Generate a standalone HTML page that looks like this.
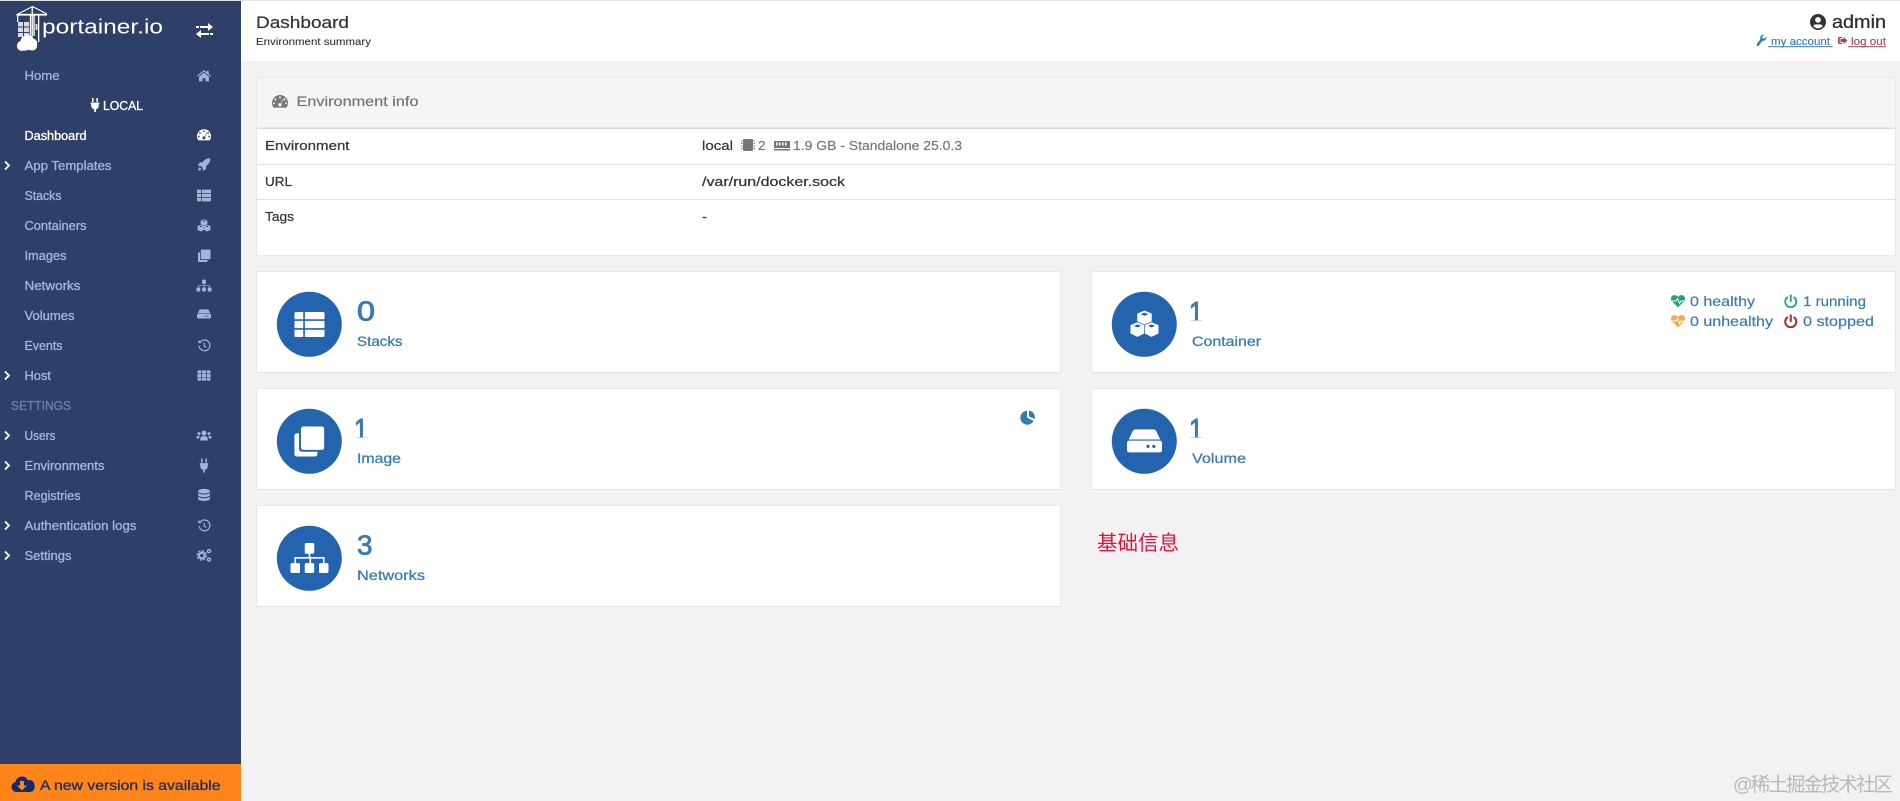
<!DOCTYPE html>
<html lang="en"><head><meta charset="utf-8"><title>Dashboard</title>
<style>
html,body{margin:0;padding:0;width:1900px;height:801px;overflow:hidden;background:#f2f2f2}
svg{display:block;filter:blur(.35px)}
text{font-family:"Liberation Sans","Noto Sans CJK SC",sans-serif}
.n{font-size:12.8px;fill:#a5b5da;stroke:#a5b5da;stroke-width:.32}
.w{fill:#fff;stroke:#fff}
.k{font-size:13px;fill:#333;stroke:#333;stroke-width:.22}
.g{font-size:13px;fill:#777;stroke:#777;stroke-width:.2}
.num{font-size:28px;fill:#3a7bb5;stroke:#3a7bb5;stroke-width:.8}
.one{font-size:31px;fill:#3a7bb5;stroke:#3a7bb5;stroke-width:1}
.lab{font-size:14px;fill:#3a7bb5;stroke:#3a7bb5;stroke-width:.28}
.st{font-size:14px;fill:#3a7bb5;stroke:#3a7bb5;stroke-width:.2}
</style></head><body>
<svg width="1900" height="801" viewBox="0 0 1900 801" xmlns="http://www.w3.org/2000/svg">
<defs>
<clipPath id="c1"><rect x="340" y="290" width="1000" height="30.500"/></clipPath>
<clipPath id="c2"><rect x="340" y="407" width="1000" height="30.500"/></clipPath>
<symbol id="list" viewBox="0 0 24 24"><path d="M1 2h6v5.800H0V3a1 1 0 0 1 1-1zM8.300 2H23a1 1 0 0 1 1 1v4.800H8.300zM0 9.100h7v5.800H0zM8.300 9.100H24v5.800H8.300zM0 16.200h7V22H1a1 1 0 0 1-1-1zM8.300 16.200H24V21a1 1 0 0 1-1 1H8.300z"/></symbol>
<symbol id="clone" viewBox="0 0 24 24"><path d="M7.300 0H22a2 2 0 0 1 2 2v14.700a2 2 0 0 1-2 2H7.300a2 2 0 0 1-2-2V2a2 2 0 0 1 2-2z"/><path d="M3.800 5.500H2a2 2 0 0 0-2 2V22a2 2 0 0 0 2 2h14.500a2 2 0 0 0 2-2v-1.800H6a2.200 2.200 0 0 1-2.200-2.200z"/></symbol>
<symbol id="map" viewBox="0 0 24 24"><path d="M10 2.500h4a1 1 0 0 1 1 1V8.300a1 1 0 0 1-1 1h-1.500v2.100h9v3.800h-1v-2.800h-7.500v2.800h-1v-2.800H3.500v2.800h-1v-3.800h9V9.300H10a1 1 0 0 1-1-1V3.500a1 1 0 0 1 1-1z"/><path d="M1 15.200h4a1 1 0 0 1 1 1v4.300a1 1 0 0 1-1 1H1a1 1 0 0 1-1-1v-4.300a1 1 0 0 1 1-1zM10 15.200h4a1 1 0 0 1 1 1v4.300a1 1 0 0 1-1 1h-4a1 1 0 0 1-1-1v-4.300a1 1 0 0 1 1-1zM19 15.200h4a1 1 0 0 1 1 1v4.300a1 1 0 0 1-1 1h-4a1 1 0 0 1-1-1v-4.300a1 1 0 0 1 1-1z"/></symbol>
<symbol id="hdd" viewBox="0 0 24 24"><path d="M6 4h12c1 0 1.700.5 2.100 1.300L22.800 11H1.200l2.700-5.700C4.300 4.500 5 4 6 4z"/><path fill-rule="evenodd" d="M1.500 11.700h21a1.500 1.500 0 0 1 1.500 1.500v5.100a1.500 1.500 0 0 1-1.500 1.500h-21A1.500 1.500 0 0 1 0 18.300v-5.100a1.500 1.500 0 0 1 1.500-1.500zM13.300 15.700a1.100 1.100 0 1 0 2.200 0 1.100 1.100 0 1 0-2.200 0zM17.300 15.700a1.100 1.100 0 1 0 2.200 0 1.100 1.100 0 1 0-2.200 0z"/></symbol>
<symbol id="cubes" viewBox="0 0 24 24"><path fill-rule="evenodd" d="M12 .5l6.200 2.500v6.700L12 12.400 5.800 9.700V3zM12 2.300L8.700 3.600 12 5 15.300 3.600z"/><path fill-rule="evenodd" d="M6 10.500l5.700 2.500v7.100L6 23 0 20.100V13zM6 12.300L2.900 13.600 6 15l3.100-1.400z"/><path fill-rule="evenodd" d="M18 10.500l6 2.500v7.100L18 23l-5.700-2.900V13zM18 12.300l-3.100 1.300L18 15l3.100-1.400z"/></symbol>
<symbol id="home" viewBox="0 0 24 24"><path d="M12 2.500l5 4.200V4h3v5.200l4 3.400-1.300 1.500L12 5.100 1.300 14.100 0 12.600z"/><path d="M12 7l8.500 7.200V22h-6v-5.500h-5V22h-6v-7.800z"/></symbol>
<symbol id="gauge" viewBox="0 0 24 24"><path fill-rule="evenodd" d="M12 3A12 12 0 0 0 0 15c0 2.400.7 4.600 2 6.500.3.400.8.500 1.200.500h17.600c.4 0 .9-.1 1.200-.5 1.300-1.900 2-4.100 2-6.500A12 12 0 0 0 12 3zM12 5a1.500 1.500 0 1 0 0 3 1.500 1.500 0 1 0 0-3zM5 8a1.500 1.500 0 1 0 0 3 1.500 1.500 0 1 0 0-3zM19 8a1.500 1.500 0 1 0 0 3 1.500 1.500 0 1 0 0-3zM3 14a1.500 1.500 0 1 0 0 3 1.500 1.500 0 1 0 0-3zM21 14a1.500 1.500 0 1 0 0 3 1.500 1.500 0 1 0 0-3zM16.500 8.500l-3.200 7.200a2.500 2.500 0 1 0-2.500 4.300 2.500 2.500 0 0 0 3.700-2.200c0-.6-.2-1-.5-1.400l3.300-7.400z"/></symbol>
<symbol id="rocket" viewBox="0 0 24 24"><path d="M23.500.5C17 .5 12.500 3 9.500 8H4L.5 14.500H6L9.500 18v5.500L16 20v-5.500C21 11.500 23.500 7 23.500.5z"/><path d="M4 17c-2 1-3 3.500-3 6 2.500 0 5-1 6-3z"/></symbol>
<symbol id="hist" viewBox="0 0 24 24"><g fill="none" stroke="currentColor" stroke-width="2.200"><path d="M5.500 6A10 10 0 1 1 3 14"/><path d="M12.500 8v6l3.500 2.500"/></g><path d="M1.500 2.500L8 8.500H1.500z"/></symbol>
<symbol id="th" viewBox="0 0 24 24"><path d="M1 2.500h6v5.700H0V3.500a1 1 0 0 1 1-1zM8.300 2.500h7.400v5.700H8.300zM17 2.500h6a1 1 0 0 1 1 1v4.700h-7zM0 9.300h7v5.400H0zM8.300 9.300h7.400v5.400H8.300zM17 9.300h7v5.400h-7zM0 15.800h7v5.700H1a1 1 0 0 1-1-1zM8.300 15.800h7.400v5.700H8.300zM17 15.800h7v4.700a1 1 0 0 1-1 1h-6z"/></symbol>
<symbol id="users" viewBox="0 0 24 24"><circle cx="12" cy="8" r="4"/><path d="M6 20v-2.500c0-2.500 2-4.500 4-4.500h4c2 0 4 2 4 4.500V20z"/><circle cx="4" cy="9" r="2.400"/><circle cx="20" cy="9" r="2.400"/><path d="M0 16v-1.500C0 13 1.300 12.500 2.500 12.500h3C4.500 13.800 4 15 4 17H1a1 1 0 0 1-1-1zM24 16v-1.500c0-1.500-1.300-2-2.500-2h-3c1 1.300 1.500 2.500 1.500 4.500h3a1 1 0 0 0 1-1z"/></symbol>
<symbol id="plug" viewBox="0 0 24 24"><path d="M7 0h2.600v7H7zM14.400 0H17v7h-2.600zM4.500 8h15v2.500h-1V13a6.500 6.500 0 0 1-5 6.300V24h-3v-4.700a6.500 6.500 0 0 1-5-6.300v-2.500h-1z"/></symbol>
<symbol id="db" viewBox="0 0 24 24"><ellipse cx="12" cy="5" rx="11" ry="4.300"/><path d="M1 8c2 2 6 3 11 3s9-1 11-3v4c0 2.200-5 4-11 4S1 14.200 1 12z"/><path d="M1 15c2 2 6 3 11 3s9-1 11-3v4c0 2.200-5 4-11 4S1 21.200 1 19z"/></symbol>
<symbol id="cogs" viewBox="0 0 24 24"><g fill="none" stroke="currentColor"><circle cx="8.500" cy="12" r="4.500" stroke-width="3.400"/><circle cx="8.500" cy="12" r="7.400" stroke-width="2.200" stroke-dasharray="3.400 2.400"/><circle cx="20" cy="5" r="2.500" stroke-width="2.200"/><circle cx="20" cy="18.500" r="2.500" stroke-width="2.200"/></g></symbol>
<symbol id="heart" viewBox="0 0 24 24"><path d="M12 23L2 12.800C-.8 10-.6 5.800 1.800 3.500 4.300 1 8.800 1.300 12 4.800c3.200-3.500 7.700-3.800 10.200-1.300 2.400 2.300 2.600 6.500-.2 9.300z"/></symbol>
<symbol id="pow" viewBox="0 0 24 24"><g fill="none" stroke="currentColor" stroke-width="3.600"><path d="M7 4.500a9.800 9.800 0 1 0 10 0"/><path d="M12 1v11" stroke-linecap="round"/></g></symbol>
<symbol id="ucirc" viewBox="0 0 24 24"><path fill-rule="evenodd" d="M12 0a12 12 0 1 0 0 24 12 12 0 1 0 0-24zM12 4.500a4.300 4.300 0 1 1 0 8.600 4.300 4.300 0 1 1 0-8.600zM12 21.500a9.300 9.300 0 0 1-7.100-3.300c.9-1.700 2.700-2.900 4.700-2.900.8.300 1.500.4 2.400.4s1.600-.1 2.400-.4c2 0 3.800 1.200 4.700 2.900A9.300 9.300 0 0 1 12 21.500z"/></symbol>
</defs>

<!-- base -->
<rect width="1900" height="801" fill="#f2f2f2"/>
<rect x="241" y="0" width="1659" height="61" fill="#fff"/>
<rect x="241" y="0" width="1659" height="1" fill="#e2e2e2"/>
<rect x="0" y="0" width="241" height="801" fill="#2f4068"/>
<rect x="0" y="0" width="241" height="1" fill="#e2e2e2"/>
<rect x="0" y="764" width="241" height="37" fill="#ff851b"/>

<!-- logo -->
<g fill="#fff">
<rect x="16.500" y="13.800" width="30.500" height="1.800"/>
<path d="M18 14L32.500 6.500 47 14" fill="none" stroke="#fff" stroke-width="1"/>
<rect x="31.600" y="6.500" width="1.300" height="30"/>
<rect x="29.800" y="15" width="1.300" height="21"/>
<rect x="33.400" y="15" width="1.300" height="21"/>
<rect x="38" y="15" width="1.300" height="27"/>
<rect x="17" y="15" width="1.300" height="7"/>
<g opacity=".82">
<rect x="18" y="22" width="5" height="4.500"/><rect x="24" y="22" width="5" height="4.500"/>
<rect x="18" y="27.500" width="5" height="4.500"/><rect x="24" y="27.500" width="5" height="4.500"/>
<rect x="18" y="33" width="5" height="4"/><rect x="24" y="33" width="5" height="4"/>
</g>
<rect x="35.500" y="24" width="2" height="6" opacity=".8"/>
<path d="M21.500 51a5 5 0 0 1-4.500-5 5 5 0 0 1 3.500-5 7 7 0 0 1 13-2.500 5 5 0 0 1 3.500 6 5 5 0 0 1-2.500 5.500c-2 .8-4 .5-6-.2-2 .9-4.500 1.200-7 .7z"/>
</g>
<text x="42" y="33.500" font-size="20.500" fill="#fff" textLength="121" lengthAdjust="spacingAndGlyphs">portainer.io</text>
<!-- toggle -->
<g fill="#fff">
<path d="M196 26h3v2h-3zM200 26h8v-3l5 4-5 4v-3h-8z"/>
<path d="M210 34h3v2h-3zM201 34h8v2h-8v3l-5-4 5-4z" transform="translate(0,-1)"/>
</g>

<!-- nav -->
<text class="n" x="24.500" y="80" textLength="35" lengthAdjust="spacingAndGlyphs">Home</text>
<g fill="#a5b5da"><use href="#home" x="197" y="68.500" width="14" height="14"/></g>
<g fill="#fff"><use href="#plug" x="88" y="98" width="14" height="14"/></g>
<text class="n w" x="103" y="110" textLength="40" lengthAdjust="spacingAndGlyphs">LOCAL</text>
<text class="n w" x="24.500" y="140" textLength="62" lengthAdjust="spacingAndGlyphs">Dashboard</text>
<g fill="#fff"><use href="#gauge" x="197" y="127.500" width="14" height="14"/></g>
<text class="n" x="24.500" y="170" textLength="87" lengthAdjust="spacingAndGlyphs">App Templates</text>
<g fill="#a5b5da"><use href="#rocket" x="197.500" y="158" width="13" height="13"/></g>
<text class="n" x="24.500" y="200" textLength="37" lengthAdjust="spacingAndGlyphs">Stacks</text>
<g fill="#a5b5da"><use href="#list" x="197" y="188.500" width="14" height="14"/></g>
<text class="n" x="24.500" y="230" textLength="62" lengthAdjust="spacingAndGlyphs">Containers</text>
<g fill="#a5b5da"><use href="#cubes" x="197.500" y="219" width="13" height="13"/></g>
<text class="n" x="24.500" y="260" textLength="42" lengthAdjust="spacingAndGlyphs">Images</text>
<g fill="#a5b5da"><use href="#clone" x="198" y="249.500" width="12.500" height="12.500"/></g>
<text class="n" x="24.500" y="290" textLength="56" lengthAdjust="spacingAndGlyphs">Networks</text>
<g fill="#a5b5da"><use href="#map" x="196.500" y="278" width="15" height="15"/></g>
<text class="n" x="24.500" y="320" textLength="50" lengthAdjust="spacingAndGlyphs">Volumes</text>
<g fill="#a5b5da"><use href="#hdd" x="197" y="307" width="14" height="14"/></g>
<text class="n" x="24.500" y="350" textLength="38" lengthAdjust="spacingAndGlyphs">Events</text>
<g fill="#a5b5da" color="#a5b5da"><use href="#hist" x="197.500" y="338.500" width="13" height="13"/></g>
<text class="n" x="24.500" y="380" textLength="26.500" lengthAdjust="spacingAndGlyphs">Host</text>
<g fill="#a5b5da"><use href="#th" x="197.500" y="369" width="13" height="13"/></g>
<text x="11" y="410" font-size="12.800" fill="#6c80ae" stroke="#6c80ae" stroke-width=".3" textLength="60" lengthAdjust="spacingAndGlyphs">SETTINGS</text>
<text class="n" x="24.500" y="440" textLength="31" lengthAdjust="spacingAndGlyphs">Users</text>
<g fill="#a5b5da"><use href="#users" x="196.500" y="428" width="15" height="15"/></g>
<text class="n" x="24.500" y="470" textLength="80" lengthAdjust="spacingAndGlyphs">Environments</text>
<g fill="#a5b5da"><use href="#plug" x="197" y="458.500" width="14" height="14"/></g>
<text class="n" x="24.500" y="500" textLength="56" lengthAdjust="spacingAndGlyphs">Registries</text>
<g fill="#a5b5da"><use href="#db" x="197.500" y="488.500" width="13" height="13"/></g>
<text class="n" x="24.500" y="530" textLength="112" lengthAdjust="spacingAndGlyphs">Authentication logs</text>
<g fill="#a5b5da" color="#a5b5da"><use href="#hist" x="197.500" y="518.500" width="13" height="13"/></g>
<text class="n" x="24.500" y="560" textLength="47" lengthAdjust="spacingAndGlyphs">Settings</text>
<g fill="#a5b5da" color="#a5b5da"><use href="#cogs" x="196.500" y="548" width="15" height="15"/></g>
<!-- chevrons -->
<g fill="none" stroke="#fff" stroke-width="1.800">
<path d="M5 161.500l4 4-4 4M5 371.500l4 4-4 4M5 431.500l4 4-4 4M5 461.500l4 4-4 4M5 521.500l4 4-4 4M5 551.500l4 4-4 4"/>
</g>

<!-- footer -->
<path fill="#14296a" fill-rule="evenodd" d="M22 776.500a6.500 6.500 0 0 1 6 4 4.500 4.500 0 0 1 2.500-.5 5.500 5.500 0 0 1 4 5.500 5 5 0 0 1-4 6.500H16a5 5 0 0 1-4.500-5.500 5 5 0 0 1 4-4.500 6.500 6.500 0 0 1 6.500-5.500z"/>
<path fill="#ff851b" d="M20 781h4v4.500h3l-5 5-5-5h3z"/>
<text x="40" y="790" font-size="14" fill="#25305f" stroke="#25305f" stroke-width=".35" textLength="180.500" lengthAdjust="spacingAndGlyphs">A new version is available</text>

<!-- header -->
<text x="256" y="28" font-size="17" fill="#333" stroke="#333" stroke-width=".2" textLength="93" lengthAdjust="spacingAndGlyphs">Dashboard</text>
<text x="256" y="45" font-size="10.500" fill="#333" stroke="#333" stroke-width=".1" textLength="115" lengthAdjust="spacingAndGlyphs">Environment summary</text>
<g fill="#333"><use href="#ucirc" x="1810" y="14" width="16" height="16"/></g>
<text x="1832" y="28" font-size="18" fill="#333" stroke="#333" stroke-width=".3" textLength="54" lengthAdjust="spacingAndGlyphs">admin</text>
<path fill="#337ab7" d="M1766.500 36.500a3.500 3.500 0 0 1-4 4.200l-3.800 5a1.300 1.300 0 0 1-2-1.600l3.700-5a3.500 3.500 0 0 1 3.600-4.600l-2 2.500 1 1.500 2.200-.2z"/>
<text x="1771" y="45" font-size="11" fill="#337ab7" stroke="#337ab7" stroke-width=".12" textLength="59" lengthAdjust="spacingAndGlyphs">my account</text>
<rect x="1768" y="46.200" width="64.500" height="1" fill="#337ab7"/>
<path fill="#a94452" d="M1842 37h-2.500a1.500 1.500 0 0 0-1.500 1.500v4a1.500 1.500 0 0 0 1.500 1.500h2.500v-1.200h-2.300v-4.600h2.300zM1843.500 37l4 3.500-4 3.500v-2h-3v-3h3z"/>
<text x="1851" y="45" font-size="11" fill="#a94452" stroke="#a94452" stroke-width=".12" textLength="35" lengthAdjust="spacingAndGlyphs">log out</text>
<rect x="1848" y="46.200" width="38" height="1" fill="#a94452"/>

<!-- env panel -->
<rect x="256.500" y="77.500" width="1639" height="178" fill="#fff" stroke="#e9e9e9"/>
<rect x="257" y="78" width="1638" height="50" fill="#f5f5f5"/>
<rect x="257" y="127.500" width="1638" height="1.500" fill="#dcdcdc"/>
<rect x="257" y="164" width="1638" height="1" fill="#e2e2e2"/>
<rect x="257" y="199" width="1638" height="1" fill="#e2e2e2"/>
<g fill="#767676"><use href="#gauge" x="272" y="93" width="16" height="16"/></g>
<text x="296.500" y="106" font-size="14" fill="#767676" stroke="#767676" stroke-width=".22" textLength="122" lengthAdjust="spacingAndGlyphs">Environment info</text>
<text class="k" x="265" y="150" textLength="84.500" lengthAdjust="spacingAndGlyphs">Environment</text>
<text class="k" x="265" y="186" textLength="27" lengthAdjust="spacingAndGlyphs">URL</text>
<text class="k" x="265" y="221" textLength="29" lengthAdjust="spacingAndGlyphs">Tags</text>
<text class="k" x="702" y="150" textLength="31" lengthAdjust="spacingAndGlyphs">local</text>
<path fill="#777" d="M744 139h8a1 1 0 0 1 1 1v10a1 1 0 0 1-1 1h-8a1 1 0 0 1-1-1v-10a1 1 0 0 1 1-1zM741 140.500h1.500v1H741zM741 143h1.500v1H741zM741 145.500h1.500v1H741zM741 148h1.500v1H741zM753.500 140.500h1.500v1h-1.500zM753.500 143h1.500v1h-1.500zM753.500 145.500h1.500v1h-1.500zM753.500 148h1.500v1h-1.500z"/>
<text class="g" x="758" y="150" textLength="7.500" lengthAdjust="spacingAndGlyphs">2</text>
<path fill="#777" fill-rule="evenodd" d="M774 141h16v7h-16zM776 142.500v3h1.500v-3zM779 142.500v3h1.500v-3zM782 142.500v3h1.500v-3zM785 142.500v3h1.500v-3zM774 149h16v1.500h-16z"/>
<text class="g" x="793" y="150" textLength="169" lengthAdjust="spacingAndGlyphs">1.9 GB - Standalone 25.0.3</text>
<text class="k" x="702" y="186" textLength="143" lengthAdjust="spacingAndGlyphs">/var/run/docker.sock</text>
<text class="k" x="702" y="221" textLength="5" lengthAdjust="spacingAndGlyphs">-</text>

<!-- cards -->
<g fill="#fff" stroke="#e9e9e9">
<rect x="256.500" y="271.500" width="804" height="101"/>
<rect x="256.500" y="388.500" width="804" height="101"/>
<rect x="256.500" y="505.500" width="804" height="101"/>
<rect x="1091.500" y="271.500" width="804" height="101"/>
<rect x="1091.500" y="388.500" width="804" height="101"/>
</g>
<g fill="#e2e2e2">
<rect x="257" y="372" width="804" height="1"/><rect x="257" y="489" width="804" height="1"/><rect x="257" y="606" width="804" height="1"/>
<rect x="1092" y="372" width="804" height="1"/><rect x="1092" y="489" width="804" height="1"/>
</g>
<g fill="#2463ae">
<circle cx="309.300" cy="324.300" r="32.500"/><circle cx="309.300" cy="441.300" r="32.500"/><circle cx="309.300" cy="558.300" r="32.500"/>
<circle cx="1144.300" cy="324.300" r="32.500"/><circle cx="1144.300" cy="441.300" r="32.500"/>
</g>
<g fill="#fff">
<use href="#list" x="294.500" y="309.500" width="30" height="30"/>
<use href="#clone" x="294.300" y="426.500" width="30" height="30"/>
<use href="#map" x="290.500" y="539" width="38" height="38"/>
<use href="#cubes" x="1129" y="310" width="31" height="28"/>
<use href="#hdd" x="1127" y="423.500" width="35" height="35"/>
</g>

<text class="num" x="357" y="320.500" textLength="18" lengthAdjust="spacingAndGlyphs">0</text>
<text class="lab" x="357" y="346" textLength="45.500" lengthAdjust="spacingAndGlyphs">Stacks</text>
<text class="one" clip-path="url(#c2)" x="354" y="440" textLength="14" lengthAdjust="spacingAndGlyphs">1</text>
<text class="lab" x="357" y="463" textLength="44" lengthAdjust="spacingAndGlyphs">Image</text>
<text class="num" x="357" y="554.500" textLength="15.500" lengthAdjust="spacingAndGlyphs">3</text>
<text class="lab" x="357" y="580" textLength="68" lengthAdjust="spacingAndGlyphs">Networks</text>
<text class="one" clip-path="url(#c1)" x="1189" y="323" textLength="14" lengthAdjust="spacingAndGlyphs">1</text>
<text class="lab" x="1192" y="346" textLength="69" lengthAdjust="spacingAndGlyphs">Container</text>
<text class="one" clip-path="url(#c2)" x="1189" y="440" textLength="14" lengthAdjust="spacingAndGlyphs">1</text>
<text class="lab" x="1192" y="463" textLength="54" lengthAdjust="spacingAndGlyphs">Volume</text>

<!-- pie -->
<path fill="#337ab7" d="M1027 410.700a7 7 0 1 0 6.500 10.300l-6.500-3.500z"/>
<path fill="#337ab7" d="M1029 410.500a7 7 0 0 1 5.700 8.500l-5.700-2.500z"/>

<!-- status -->
<g fill="#26a17e"><use href="#heart" x="1671" y="294" width="14" height="14"/></g>
<path d="M1672 301h4l1.500-2.500 2 5 1.500-2.500h3" fill="none" stroke="#fff" stroke-width="1"/>
<g fill="#f0ad4e"><use href="#heart" x="1671" y="314" width="14" height="14"/></g>
<path d="M1672 321h4l1.500-2.500 2 5 1.500-2.500h3" fill="none" stroke="#fff" stroke-width="1"/>
<g color="#2fae82"><use href="#pow" x="1784" y="294.500" width="13.500" height="13.500"/></g>
<g color="#a82c2c"><use href="#pow" x="1784" y="314.500" width="13.500" height="13.500"/></g>
<text class="st" x="1690" y="306" textLength="65" lengthAdjust="spacingAndGlyphs">0 healthy</text>
<text class="st" x="1690" y="326" textLength="83" lengthAdjust="spacingAndGlyphs">0 unhealthy</text>
<text class="st" x="1803" y="306" textLength="63" lengthAdjust="spacingAndGlyphs">1 running</text>
<text class="st" x="1803" y="326" textLength="71" lengthAdjust="spacingAndGlyphs">0 stopped</text>

<!-- annotation -->
<text x="1097" y="550" font-size="20.500" fill="#e8133c" textLength="82">基础信息</text>
<!-- watermark -->
<text x="1733" y="791" font-size="19.500" fill="#b8b8b8" textLength="160">@稀土掘金技术社区</text>
</svg>
</body></html>
